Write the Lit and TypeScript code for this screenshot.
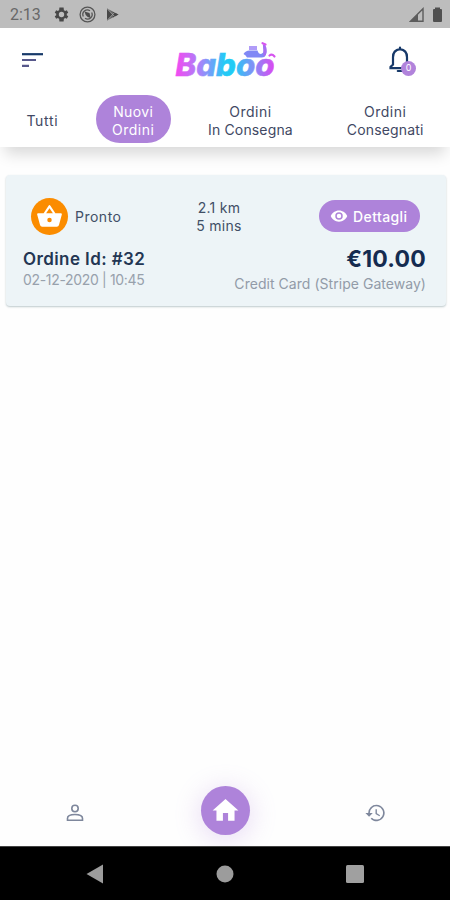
import { LitElement, html, css } from "lit";
import { customElement } from "lit/decorators.js";

const base = css`
  :host { display: block; box-sizing: border-box; }
  * { box-sizing: border-box; }
  svg { display: block; flex: none; }
`;

@customElement("status-bar")
class StatusBar extends LitElement {
  static styles = [base, css`
    .bar { height: 28px; background: #bdbdbd; display: flex; align-items: center; padding: 1px 7px 0 10px; color: #505050; }
    .time { font: 400 16px/28px Roboto, sans-serif; letter-spacing: 0; width: 43px; color: #686868; }
    .icons { display: flex; gap: 9px; align-items: center; }
    .right { margin-left: auto; display: flex; gap: 7px; align-items: center; }
  `];
  render() {
    return html`<div class="bar">
      <span class="time">2:13</span>
      <div class="icons">
        <svg width="17" height="17" viewBox="0 0 24 24"><path fill="#484848" fill-rule="evenodd" d="M19.43 12.98c.04-.32.07-.64.07-.98s-.03-.66-.07-.98l2.11-1.65-2-3.46-2.49 1c-.52-.4-1.08-.73-1.69-.98L14.98 2h-5.960l-.38 3.930c-.61.25-1.170.59-1.690.98l-2.490-1-2 3.460 2.110 1.650c-.04.32-.07.65-.07.98s.03.66.07.98l-2.110 1.650 2 3.460 2.490-1c.52.4 1.080.73 1.690.98L9.020 22h5.960l.38-3.930c.61-.25 1.170-.59 1.690-.98l2.490 1 2-3.460zM12 15.800a3.800 3.800 0 1 1 0-7.600 3.800 3.800 0 0 1 0 7.600z"/></svg>
        <svg width="17" height="17" viewBox="0 0 17 17"><circle cx="8.500" cy="8.500" r="7.400" fill="none" stroke="#555" stroke-width="1.300"/><path d="M4.300 10.500A4.600 4.600 0 0 1 11 4.700M12.700 6.500A4.600 4.600 0 0 1 6 12.300" fill="none" stroke="#555" stroke-width="1.300"/><path d="M5.500 5.500l5 1.400 1.200 5-3-.800-2-2z" fill="#4c4c4c"/></svg>
        <svg width="15" height="15" viewBox="0 0 15 15"><path d="M2 1.500l11.500 6L2 13.500z" fill="#666"/><path d="M2 1.500v12l5.500-6zM8 5l5.500 2.500L8 10.500z" fill="#484848"/><path d="M2.500 2l7 7.500M2.500 13l7-7.500" stroke="#aaa" stroke-width=".8"/></svg>
      </div>
      <div class="right">
        <svg width="16" height="16" viewBox="0 0 16 16"><path d="M1.500 14.300H14V1.800z" fill="none" stroke="#5c5c5c" stroke-width="1.400"/><path d="M1 15h8V7z" fill="#5c5c5c"/></svg>
        <svg width="11" height="16" viewBox="0 0 11 16"><path d="M3 2V.5h5V2h1q1 0 1 1v11q0 1-1 1H2q-1 0-1-1V3q0-1 1-1z" fill="#505050"/></svg>
      </div></div>`;
  }
}

@customElement("app-header")
class AppHeader extends LitElement {
  static styles = [base, css`
    :host { position: relative; z-index: 1; }
    .header { height: 119px; background: #fff; box-shadow: 0 12px 14px -5px rgba(0,0,0,.15); }
    .top { height: 67px; display: grid; grid-template-columns: 100px 1fr 100px; align-items: start; }
    .menu { margin: 24px 0 0 22px; }
    .logo { margin: 9px auto 0; overflow: visible; }
    .bell { position: relative; width: 28px; height: 30px; margin: 18px 0 0 39px; }
    .badge { position: absolute; left: 12px; top: 15px; width: 15px; height: 15px; border-radius: 50%; background: #b183db; color: #fff; font: 9px/14px Inter, sans-serif; text-align: center; }
    .tabs { display: flex; height: 48px; align-items: center; }
    .tab { width: 132px; padding: 3px 0 0 2px; text-align: center; color: #414863; font: 400 14px/18px Inter, sans-serif; letter-spacing: .15px; }
    .all { width: 85px; padding: 3px 0 0; letter-spacing: .7px; }
    .new { width: 97px; padding: 0; display: flex; justify-content: center; letter-spacing: .35px; }
    .mid { width: 137px; padding-left: 1px; }
    .pill { width: 75px; height: 48px; border-radius: 24px; background: #ae83da; color: #fff; padding-top: 8px; }
    .wide { letter-spacing: .5px; }
  `];
  render() {
    return html`<div class="header"><div class="top">
      <svg class="menu" width="22" height="17" viewBox="0 0 22 17"><path d="M0 2.200h21" stroke="#173969" stroke-width="2.200"/><path d="M0 8h14M0 13.800h7" stroke="#57588b" stroke-width="2.200"/></svg>
      <svg class="logo" width="112" height="50" viewBox="-4 0 112 50">
        <defs><linearGradient id="ink" gradientUnits="userSpaceOnUse" x1="3" y1="0" x2="104" y2="0"><stop offset="0" stop-color="#f34af0"/><stop offset=".25" stop-color="#a386fa"/><stop offset=".48" stop-color="#24c9f6"/><stop offset=".57" stop-color="#20cbf5"/><stop offset=".75" stop-color="#7b94f6"/><stop offset="1" stop-color="#e83ff0"/></linearGradient></defs>
        <text x="2.500" y="39" fill="url(#ink)" stroke="url(#ink)" stroke-width=".5" font-family="Inter, sans-serif" font-style="italic" font-weight="800" font-size="31" textLength="99" lengthAdjust="spacingAndGlyphs">Baboo</text>
        <path d="M76 9h8v4h-8z" fill="#b09cf8"/>
        <path d="M70.500 17q2-3.500 6-3.500h8q1 3.500 3.500 3.500 3-1 3-4.500l-1.200-4 1.800-.8q3 5.300 1.200 10.300-1 2.500-4 2.500H74q-1-2.500-3.500-3.500z" fill="#8088f5"/>
        <path d="M90 7.700l1.800-.8q3 5.300 1.200 10.300-.8 2-2.500 2.400z" fill="#a86df2"/>
        <path d="M89.500 6.200l3 1.300M96.500 18.500q2.500-2 5 1" stroke="#d654ef" stroke-width="2.200" fill="none" stroke-linecap="round"/>
      </svg>
      <div class="bell"><svg width="25" height="28" viewBox="0 0 25 28"><path d="M11 3.200c-4.500.6-7 3.800-7 8v7.300L1.500 21v1.200h19.200V21L18 18.500v-7.300c0-4.200-2.500-7.400-7-8zM11 3.200V1.500M8.800 25h4" fill="none" stroke="#173969" stroke-width="2.200" stroke-linecap="round"/></svg><span class="badge">0</span></div>
    </div>
    <div class="tabs"><div class="tab all">Tutti</div><div class="tab new"><div class="pill">Nuovi<br><span class="wide">Ordini</span></div></div><div class="tab mid"><span class="wide">Ordini</span><br>In Consegna</div><div class="tab"><span class="wide">Ordini</span><br>Consegnati</div></div></div>`;
  }
}

@customElement("order-card")
class OrderCard extends LitElement {
  static styles = [base, css`
    .card { margin: 28px 4px 0 6px; height: 131px; padding: 22px 20px 0 17px; border-radius: 4px; background: #edf4f7; box-shadow: 0 1px 2px rgba(40,80,85,.3); font-family: Inter, sans-serif; color: #414f66; }
    .summary { height: 37px; display: grid; grid-template-columns: 157px 78px 1fr; align-items: center; }
    .state { display: flex; align-items: center; gap: 7px; padding-left: 8px; font-size: 14px; }
    .round { width: 37px; height: 37px; border-radius: 50%; background: #fb8c00; display: grid; place-items: center; }
    .pronto { letter-spacing: .5px; }
    .travel { font-size: 14px; line-height: 18px; text-align: center; padding-top: 2px; }
    .km, .mins { letter-spacing: .3px; }
    .button { justify-self: end; margin-right: 6px; width: 101px; height: 32px; border-radius: 16px; background: #ae83da; color: #fff; display: flex; align-items: center; padding-left: 11px; gap: 5px; font-size: 14px; font-weight: 500; letter-spacing: .4px; }
    .label { padding-top: 1px; }
    .details { display: flex; justify-content: space-between; padding-top: 13px; white-space: nowrap; }
    .id { font-size: 17px; font-weight: 600; line-height: 25px; color: #233653; letter-spacing: .4px; }
    .date { font-size: 14px; line-height: 16px; color: #98a1ac; letter-spacing: -.33px; }
    .right { text-align: right; }
    .price { font-size: 23px; font-weight: 700; line-height: 25px; color: #142b50; letter-spacing: .2px; }
    .pay { font-size: 14px; line-height: 24px; color: #929ba8; letter-spacing: .04px; }
  `];
  render() {
    return html`<div class="card"><div class="summary">
      <div class="state"><span class="round"><svg width="27" height="27" viewBox="0 0 24 24"><path fill="#fff" fill-rule="evenodd" d="M17.210 9l-4.380-6.560a1 1 0 0 0-1.660 0L6.790 9H2c-.55 0-1 .45-1 1l.04.27 2.540 9.270A2 2 0 0 0 5.500 21h13a2 2 0 0 0 1.930-1.460l2.540-9.270L23 10c0-.55-.45-1-1-1zM9 9l3-4.400L15 9zm3 8a2 2 0 1 1 0-4 2 2 0 0 1 0 4z"/></svg></span><span class="pronto">Pronto</span></div>
      <div class="travel"><span class="km">2.1 km</span><br><span class="mins">5 mins</span></div>
      <div class="button"><svg width="18" height="18" viewBox="0 0 24 24"><path fill="#fff" fill-rule="evenodd" d="M12 4.500C7 4.500 2.730 7.610 1 12c1.730 4.390 6 7.500 11 7.500s9.270-3.110 11-7.500c-1.730-4.390-6-7.500-11-7.500zM12 17a5 5 0 1 1 0-10 5 5 0 0 1 0 10zm0-8a3 3 0 1 0 0 6 3 3 0 0 0 0-6z"/></svg><span class="label">Dettagli</span></div>
    </div><div class="details"><div><div class="id">Ordine Id: #32</div><div class="date">02-12-2020 | 10:45</div></div><div class="right"><div class="price">€10.00</div><div class="pay">Credit Card (Stripe Gateway)</div></div></div></div>`;
  }
}

@customElement("bottom-nav")
class BottomNav extends LitElement {
  static styles = [base, css`
    .nav { height: 72px; display: grid; grid-template-columns: repeat(3, 1fr); align-items: center; justify-items: center; overflow: visible; }
    .home { width: 49px; height: 49px; border-radius: 50%; background: #ae83da; display: grid; place-items: center; box-shadow: 0 4px 24px 3px rgba(174,131,218,.24); }
    .side { margin-top: 6px; }
  `];
  render() {
    return html`<div class="nav">
      <svg class="side" width="18" height="18" viewBox="0 0 18 18" fill="none" stroke="#7e879c" stroke-width="1.600"><circle cx="9" cy="4.500" r="3.200"/><path d="M1.500 16.200v-2c0-5 15-5 15 0v2z"/></svg>
      <div class="home"><svg width="31" height="31" viewBox="0 0 24 24"><path fill="#fff" d="M10 20v-6h4v6h5v-8h3L12 3 2 12h3v8z"/></svg></div>
      <svg class="side" width="23" height="22" viewBox="0 0 24 24" fill="#7e879c"><path d="M13 3a9 9 0 0 0-9 9H1l4 4 4-4H5.800A7.200 7.200 0 1 1 8 17.100l-1.300 1.300A9 9 0 1 0 13 3zm-1 5v5l4.280 2.540.72-1.210-3.500-2.080V8z"/></svg>
    </div>`;
  }
}

@customElement("system-nav")
class SystemNav extends LitElement {
  static styles = [base, css`
    .bar { height: 54px; background: #000; border-top: 1px solid #444; display: grid; grid-template-columns: 190px 70px 190px; align-items: center; justify-items: center; }
  `];
  render() {
    return html`<div class="bar">
      <svg width="18" height="20" viewBox="0 0 18 20"><path d="M.5 10L17 .5v19z" fill="#9c9c9c"/></svg>
      <svg width="18" height="18"><circle cx="9" cy="9" r="8.500" fill="#9c9c9c"/></svg>
      <svg width="18" height="18"><rect width="18" height="18" rx="1.500" fill="#a0a0a0"/></svg>
    </div>`;
  }
}

@customElement("app-root")
class AppRoot extends LitElement {
  static styles = [base, css`
    .screen { width: 450px; height: 900px; display: flex; flex-direction: column; background: #fefefe; overflow: hidden; }
    .content { flex: 1; }
  `];
  render() {
    return html`<div class="screen"><status-bar></status-bar><app-header></app-header><div class="content"><order-card></order-card></div><bottom-nav></bottom-nav><system-nav></system-nav></div>`;
  }
}
